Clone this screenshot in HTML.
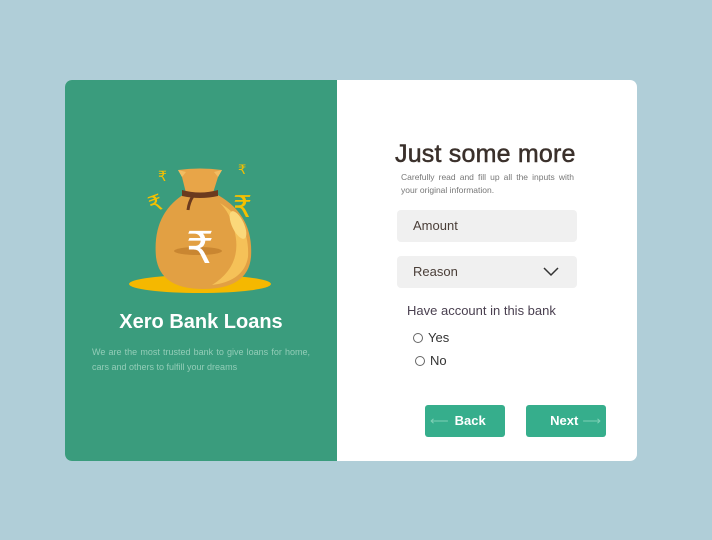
<!DOCTYPE html>
<html><head><meta charset="utf-8"><style>
*{margin:0;padding:0;box-sizing:border-box}
body{width:712px;height:540px;background:#b0ced8;font-family:"Liberation Sans",sans-serif;position:relative;overflow:hidden}
.card{position:absolute;left:65px;top:80px;width:572px;height:381px;background:#fff;border-radius:7px;overflow:hidden}
.left{position:absolute;left:0;top:0;width:272px;height:381px;background:#3a9c7d}
.title{position:absolute;left:0;width:272px;top:231px;text-align:center;color:#fff;font-weight:bold;font-size:20px}
.desc{position:absolute;left:27px;top:265px;width:218px;color:#93cdb8;font-size:9px;line-height:15px;text-align:justify;text-align-last:left}
h1{position:absolute;left:330px;top:60px;font-size:25px;font-weight:normal;color:#3a302b;letter-spacing:0.2px;-webkit-text-stroke:0.5px #3a302b}
.sub{position:absolute;left:336px;top:91px;width:173px;font-size:8.5px;line-height:13px;color:#777;text-align:justify;text-align-last:left}
.in{position:absolute;left:332px;width:180px;height:32px;background:#f0f0f0;border-radius:4px;font-size:13px;color:#4a3e38;padding:8px 16px}
.lbl{position:absolute;left:342px;top:223px;font-size:13px;color:#4a4050}
.r{position:absolute;font-size:13px;color:#333}
.r i{display:inline-block;width:10px;height:10px;border:1px solid #666;border-radius:50%;margin-right:5px;vertical-align:-1px}
.btn{position:absolute;top:325px;width:80px;height:32px;background:#36ae8c;border-radius:3px;color:#fff;font-weight:bold;font-size:13px;line-height:32px}
</style></head><body>
<div class="card">
<div class="left">
<svg style="position:absolute;left:55px;top:75px" width="160" height="140" viewBox="0 0 160 140">
<ellipse cx="80" cy="129" rx="71" ry="9" fill="#f5b800"/>
<path d="M66 38 Q32 58 36 102 Q40 134 83 134 Q128 134 131 102 Q134 58 94 38 Z" fill="#e2a043"/>
<path d="M100 48 Q130 66 128 102 Q124 126 92 130 Q124 110 114 74 Q110 58 100 48Z" fill="#f5c158"/>
<ellipse cx="118" cy="70" rx="6" ry="15" fill="#fbd87a" transform="rotate(-25 118 70)"/>
<path d="M66 38 L62 22 L58 15 Q80 12 102 15 L98 22 L93 38 Z" fill="#e8a548"/>
<path d="M62 22 L58 15 L66 17Z M98 22 L102 15 L94 17Z" fill="#f2bd62"/>
<path d="M62 35 Q80 40 98 35 L98 41 Q80 45 62 41Z" fill="#6b3a1e"/>
<path d="M73 41 Q69 47 68 55" stroke="#6b3a1e" stroke-width="3" fill="none"/>
<ellipse cx="78" cy="96" rx="24" ry="4" fill="#c98631"/>
<text x="66" y="108" font-size="44" fill="#fff" font-family="DejaVu Sans">₹</text>
<text x="38" y="26" font-size="14" fill="#f5c000" font-family="DejaVu Sans">₹</text>
<text x="28" y="55" font-size="22" fill="#f5c000" font-family="DejaVu Sans" transform="rotate(-20 38 46)">₹</text>
<text x="118" y="19" font-size="13" fill="#f5c000" font-family="DejaVu Sans">₹</text>
<text x="113" y="62" font-size="30" fill="#f5c000" font-family="DejaVu Sans">₹</text>
</svg>
<div class="title">Xero Bank Loans</div>
<div class="desc">We are the most trusted bank to give loans for home, cars and others to fulfill your dreams</div>
</div>
<h1>Just some more</h1>
<div class="sub">Carefully read and fill up all the inputs with your original information.</div>
<div class="in" style="top:130px">Amount</div>
<div class="in" style="top:176px">Reason
<svg style="position:absolute;right:18px;top:11px" width="16" height="10" viewBox="0 0 16 10"><path d="M1 1 L8 8 L15 1" stroke="#333" stroke-width="1.5" fill="none"/></svg></div>
<div class="lbl">Have account in this bank</div>
<div class="r" style="left:348px;top:250px"><i></i>Yes</div>
<div class="r" style="left:350px;top:273px"><i></i>No</div>
<div class="btn" style="left:360px"><span style="color:#7fd0b6;font-weight:normal;margin:0 6px 0 5px">⟵</span>Back</div>
<div class="btn" style="left:461px;text-align:right;padding-right:5px">Next<span style="color:#7fd0b6;font-weight:normal;margin-left:4px">⟶</span></div>
</div>
</body></html>
